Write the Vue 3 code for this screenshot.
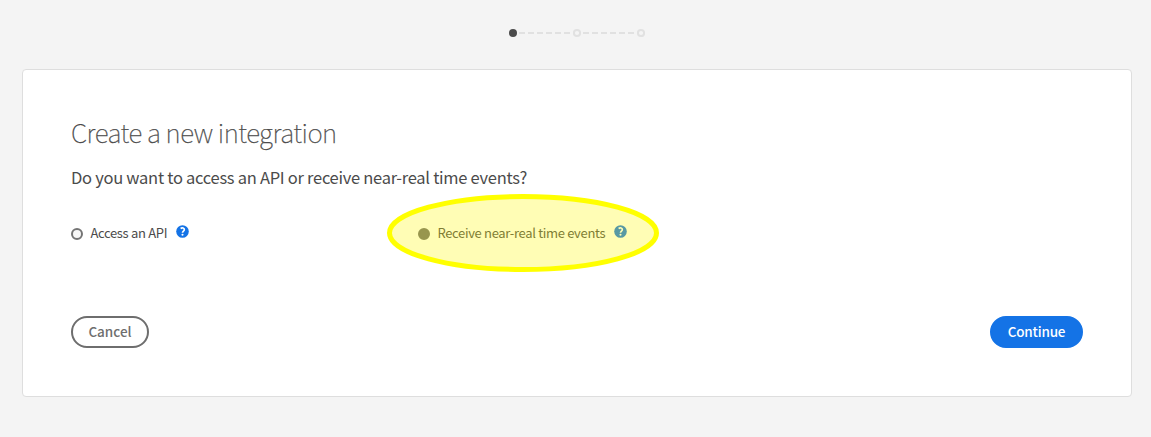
<script setup>
const options = [
  { id: 'api', label: 'Access an API', selected: false },
  { id: 'events', label: 'Receive near-real time events', selected: true },
]
</script>

<template>
  <main class="page">
    <svg class="steps" width="138" height="10" viewBox="0 0 138 10">
      <path d="M12 5H65M76 5H129" class="track" />
      <circle cx="6" cy="5" r="4" class="current" />
      <circle cx="70" cy="5" r="3.1" class="pending" />
      <circle cx="134" cy="5" r="3.1" class="pending" />
    </svg>
    <section class="card">
      <h1>Create a new integration</h1>
      <p class="question">Do you want to access an API or receive near-real time events?</p>
      <div class="options">
        <div v-for="o in options" :key="o.id" class="option" :class="o.id">
          <i class="radio" :class="{ selected: o.selected }"></i>
          <span class="label">{{ o.label }}</span>
          <svg class="help" width="13" height="13" viewBox="0 0 13 13">
            <circle cx="6.5" cy="6.5" r="6.3" fill="#1473e6" />
            <path d="M4.6 3.5C6.2 2.4 8.5 3 8.3 4.7C8.2 6.1 6.5 6.2 6.5 7.8" fill="none" stroke="#fff" stroke-width="1.7" />
            <circle cx="6.5" cy="9.8" r="1.05" fill="#fff" />
          </svg>
          <svg v-if="o.selected" class="highlight" width="274" height="80" viewBox="0 0 274 80">
            <ellipse cx="137" cy="40" rx="133.5" ry="36.5" />
          </svg>
        </div>
      </div>
      <div class="actions">
        <button class="cancel">Cancel</button>
        <button class="continue">Continue</button>
      </div>
    </section>
  </main>
</template>

<style>
body { background: #f4f4f4; }
</style>

<style scoped>
.page {
  box-sizing: border-box;
  height: 437px;
  padding: 28px 19px 0 22px;
  background: #f4f4f4;
  color: #4b4b4b;
  font-family: "Noto Sans CJK SC", "Open Sans", sans-serif;
}
.steps { display: block; margin-left: 485px; }
.track { stroke: #e1e1e1; stroke-width: 2; stroke-dasharray: 6 3; fill: none; }
.current { fill: #4b4b4b; }
.pending { fill: #f4f4f4; stroke: #e1e1e1; stroke-width: 2; }
.card {
  box-sizing: border-box;
  width: 1110px;
  height: 328px;
  margin-top: 31px;
  padding: 45px 48px 0;
  background: #fff;
  border: 1px solid #dedede;
  border-radius: 4px;
}
h1 {
  margin: 0;
  height: 34px;
  line-height: 34px;
  font-size: 26px;
  font-weight: 100;
  letter-spacing: -0.49px;
  -webkit-text-stroke: 0.25px #4b4b4b;
  white-space: nowrap;
}
.question {
  margin: 16px 0 0;
  height: 24px;
  line-height: 24px;
  font-size: 16.5px;
  letter-spacing: -0.28px;
  white-space: nowrap;
}
.options { display: flex; margin-top: 33px; height: 22px; }
.option { position: relative; display: flex; align-items: center; width: 347px; white-space: nowrap; }
.radio {
  box-sizing: border-box;
  width: 12px;
  height: 12px;
  margin-top: 2px;
  border: 2px solid #747474;
  border-radius: 50%;
  background: #f7f7f7;
}
.radio.selected { background: #6e6e6e; border-color: #6e6e6e; }
.label { margin-left: 7.4px; font-size: 13px; line-height: 22px; letter-spacing: -0.32px; }
.help { margin: 0 0 3px 9px; }
.highlight { position: absolute; left: -32px; top: -29px; pointer-events: none; }
.highlight ellipse { fill: rgb(255 247 0 / 0.29); stroke: #ff0; stroke-width: 5; }
.actions { display: flex; justify-content: space-between; margin-top: 72px; }
button {
  box-sizing: border-box;
  height: 32px;
  padding: 0 0 2px;
  border-radius: 16px;
  font-family: inherit;
  font-size: 13.5px;
  font-weight: 500;
  line-height: 26px;
}
.cancel { width: 78px; border: 2px solid #6e6e6e; background: #fff; color: #6e6e6e; }
.continue { width: 93px; border: 2px solid #1473e6; background: #1473e6; color: #fff; letter-spacing: -0.2px; }
</style>
